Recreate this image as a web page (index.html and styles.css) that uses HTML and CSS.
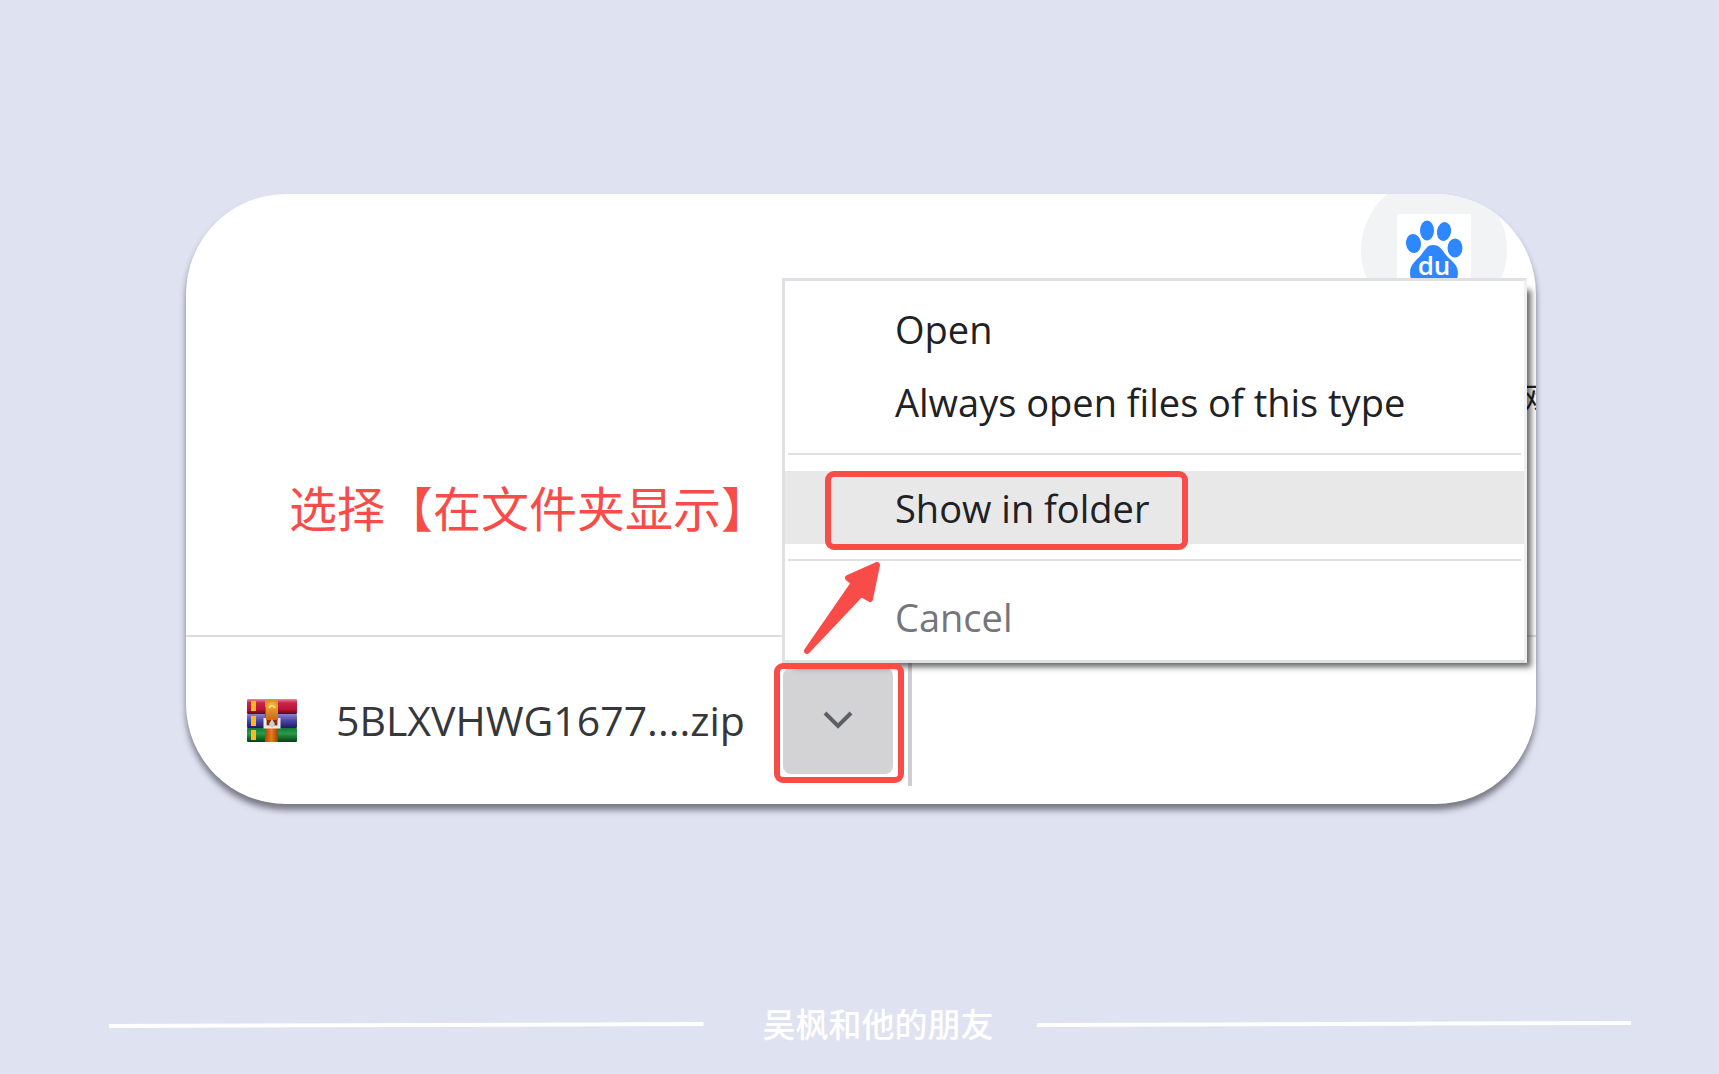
FILE: index.html
```html
<!DOCTYPE html>
<html lang="zh-CN">
<head>
    <meta charset="UTF-8">
    <meta name="viewport" content="width=device-width, initial-scale=1.0">
    <title>选择【在文件夹显示】</title>
    <link rel="stylesheet" href="styles.css">
</head>
<body>

    <main class="card">
        <!-- Browser page area -->
        <section class="page-area">
            <h1 class="tip">选择【在文件夹显示】</h1>
            <svg class="site-icon" viewBox="0 0 146 146" aria-label="Baidu">
                <circle cx="73" cy="73" r="73" fill="#f1f3f4"/>
                <rect x="36" y="37" width="74" height="74" fill="#fff"/>
                <g fill="#2d87ff">
                    <ellipse cx="52.5" cy="66.5" rx="7.5" ry="9.5" transform="rotate(-8 52.5 66.5)"/>
                    <ellipse cx="66" cy="53.5" rx="7" ry="10"/>
                    <ellipse cx="83" cy="54.5" rx="7" ry="9.5" transform="rotate(10 83 54.5)"/>
                    <ellipse cx="94" cy="71" rx="7.5" ry="9.5"/>
                    <path d="M72 68c7 0 9 5 13 10 5 6 12 9 12 18 0 10-7 13-13 13-8 0-17-1-24 0-6 0-11-5-11-13 0-9 6-12 11-18 4-5 6-10 12-10z"/>
                </g>
                <text x="73" y="98" text-anchor="middle" class="site-icon-text">du</text>
            </svg>
            <span class="page-text">网</span>
        </section>

        <!-- Download bar -->
        <section class="download-bar">
            <svg class="zip-icon" viewBox="0 0 50 44" aria-hidden="true">
                <defs>
                    <linearGradient id="red" x1="0" y1="0" x2="0" y2="1">
                        <stop offset="0" stop-color="#e88aa8"/>
                        <stop offset=".25" stop-color="#cf2448"/>
                        <stop offset=".7" stop-color="#b51538"/>
                        <stop offset="1" stop-color="#5c0718"/>
                    </linearGradient>
                    <linearGradient id="blue" x1="0" y1="0" x2="0" y2="1">
                        <stop offset="0" stop-color="#8583d8"/>
                        <stop offset=".5" stop-color="#4445a6"/>
                        <stop offset="1" stop-color="#1c1d5e"/>
                    </linearGradient>
                    <linearGradient id="green" x1="0" y1="0" x2="0" y2="1">
                        <stop offset="0" stop-color="#167a35"/>
                        <stop offset=".4" stop-color="#2a994b"/>
                        <stop offset="1" stop-color="#053f16"/>
                    </linearGradient>
                    <linearGradient id="belt" x1="0" y1="0" x2="1" y2="0">
                        <stop offset="0" stop-color="#a94a08"/>
                        <stop offset=".5" stop-color="#ea7a1c"/>
                        <stop offset="1" stop-color="#a63e05"/>
                    </linearGradient>
                    <linearGradient id="pull" x1="0" y1="0" x2="0" y2="1">
                        <stop offset="0" stop-color="#f7b23a"/>
                        <stop offset="1" stop-color="#c96a10"/>
                    </linearGradient>
                </defs>
                <rect x="0" y="0" width="50" height="15" rx="1" fill="url(#red)"/>
                <rect x="0" y="15" width="50" height="14" rx="1" fill="url(#blue)"/>
                <rect x="0" y="29" width="50" height="14" rx="1" fill="url(#green)"/>
                <g fill="#ffb91e">
                    <rect x="4" y="2" width="5" height="10"/>
                    <rect x="4" y="17" width="5" height="10"/>
                    <rect x="4" y="31" width="5" height="10"/>
                </g>
                <rect x="18" y="0" width="13" height="43" fill="url(#belt)"/>
                <rect x="18" y="0" width="13" height="8" fill="#d99a10"/>
                <path d="M18 19v9h14v-9" fill="none" stroke="#eceae8" stroke-width="3"/>
                <rect x="20" y="20" width="10" height="6" fill="#8a2f0a"/>
                <path d="M19 21V9a6 6 0 0 1 12 0v12z" fill="url(#pull)"/>
                <path d="M22 9q3-5 6 0" fill="none" stroke="#ffe07a" stroke-width="2"/>
                <path d="M25 20l3 5-3 4-3-4z" fill="#c9cfd3"/>
            </svg>
            <span class="file-name">5BLXVHWG1677....zip</span>
            <div class="more-wrap">
                <button type="button" class="more-btn" aria-label="More actions">
                    <svg viewBox="0 0 30 20" width="30" height="20">
                        <path d="M2 2l13 13L28 2" fill="none" stroke="#5c6064" stroke-width="4"/>
                    </svg>
                </button>
                <span class="mark mark-button"></span>
            </div>
            <span class="bar-divider"></span>
        </section>

        <!-- Context menu -->
        <div class="menu">
            <button type="button" class="menu-item">Open</button>
            <button type="button" class="menu-item">Always open files of this type</button>
            <hr class="menu-line">
            <button type="button" class="menu-item active">Show in folder<span class="mark mark-item"></span></button>
            <hr class="menu-line">
            <button type="button" class="menu-item cancel">Cancel</button>
            <svg class="arrow" viewBox="0 0 78 96" aria-hidden="true">
                <path d="M74 4L45 17l6 5L4 90l54-57 9 5z" fill="#f84c48" stroke="#f84c48" stroke-width="6" stroke-linejoin="round"/>
            </svg>
        </div>
    </main>

    <footer class="footer">
        <svg class="footer-line"><line x1="0" y1="7" x2="100%" y2="5"/></svg>
        <span class="footer-name">吴枫和他的朋友</span>
        <svg class="footer-line"><line x1="0" y1="6" x2="100%" y2="4"/></svg>
    </footer>

</body>
</html>
```

FILE: styles.css
```css
* {
    box-sizing: border-box;
    margin: 0;
    padding: 0;
}

body {
    min-height: 100vh;
    display: flex;
    flex-direction: column;
    justify-content: space-between;
    padding-top: 194px;
    background-color: #dfe2f1;
    font-family: "Open Sans", "Noto Sans CJK SC", sans-serif;
}

button {
    border: none;
    background: none;
    font: inherit;
    cursor: pointer;
}

/* Card */
.card {
    position: relative;
    margin: 0 183px 0 186px;
    background-color: #fff;
    border-radius: 100px;
    box-shadow: 0 6px 6px rgba(50, 52, 60, 0.6);
}

.page-area {
    position: relative;
    display: flex;
    justify-content: space-between;
    align-items: flex-start;
    height: 441px;
    padding: 0 29px 0 103px;
    border-radius: 100px 100px 0 0;
    overflow: hidden;
}

.tip {
    align-self: flex-end;
    margin-bottom: 93px;
    color: #f84c48;
    font-family: "Noto Sans CJK SC", sans-serif;
    font-size: 48px;
    font-weight: 400;
    line-height: 72px;
}

.site-icon {
    width: 146px;
    height: 146px;
    margin-top: -17px;
}

.site-icon-text {
    fill: #fff;
    font-family: "Open Sans", sans-serif;
    font-size: 26px;
    font-weight: 600;
}

.page-text {
    position: absolute;
    right: -16px;
    top: 185px;
    color: #222;
    font-size: 32px;
    line-height: 40px;
}

/* Download bar */
.download-bar {
    display: flex;
    align-items: center;
    height: 169px;
    padding-left: 61px;
    border-top: 2px solid #dcdddd;
}

.zip-icon {
    width: 50px;
    height: 44px;
    margin-right: 39px;
}

.file-name {
    width: 447px;
    padding-bottom: 2px;
    color: #35373a;
    font-size: 41px;
    line-height: 56px;
    white-space: nowrap;
}

.more-wrap {
    position: relative;
}

.more-btn {
    display: flex;
    align-items: center;
    justify-content: center;
    width: 110px;
    height: 106px;
    background-color: #d3d3d5;
    border-radius: 8px;
}

.bar-divider {
    width: 4px;
    height: 130px;
    margin-left: 15px;
    background-color: #cbcdce;
}

/* Context menu */
.menu {
    position: absolute;
    top: 84px;
    right: 9px;
    width: 745px;
    padding: 11px 0 4px;
    background-color: #fff;
    border: 3px solid #dee0e4;
    border-right-color: #eff0f2;
    box-shadow: 8px 8px 6px -4px rgba(0, 0, 0, 0.6);
}

.menu-item {
    position: relative;
    display: block;
    width: 100%;
    height: 73px;
    padding-left: 110px;
    color: #202124;
    font-size: 38px;
    text-align: left;
}

.menu-item.active {
    background-color: #e8e8e8;
}

.menu-item.cancel {
    height: 79px;
    color: #73767b;
}

.menu-line {
    height: 2px;
    margin: 15px 3px 16px;
    border: none;
    background-color: #dee0e4;
}

/* Red marks */
.mark {
    position: absolute;
    border: 6px solid #f84c48;
    border-radius: 9px;
    pointer-events: none;
}

.mark-item {
    top: 0;
    left: 40px;
    width: 363px;
    height: 79px;
}

.mark-button {
    top: -5px;
    left: -9px;
    width: 130px;
    height: 120px;
    z-index: 2;
}

.arrow {
    position: absolute;
    left: 18px;
    bottom: 3px;
    width: 78px;
    height: 96px;
}

/* Footer */
.footer {
    display: flex;
    align-items: center;
    padding: 0 88px 24px 109px;
}

.footer-line {
    flex: 1;
    min-width: 0;
    height: 12px;
}

.footer-line line {
    stroke: #fff;
    stroke-width: 4;
}

.footer-name {
    padding: 0 43px 4px 59px;
    color: #fff;
    font-family: "Noto Sans CJK SC", sans-serif;
    font-size: 33px;
    font-weight: 500;
    line-height: 46px;
}
```
